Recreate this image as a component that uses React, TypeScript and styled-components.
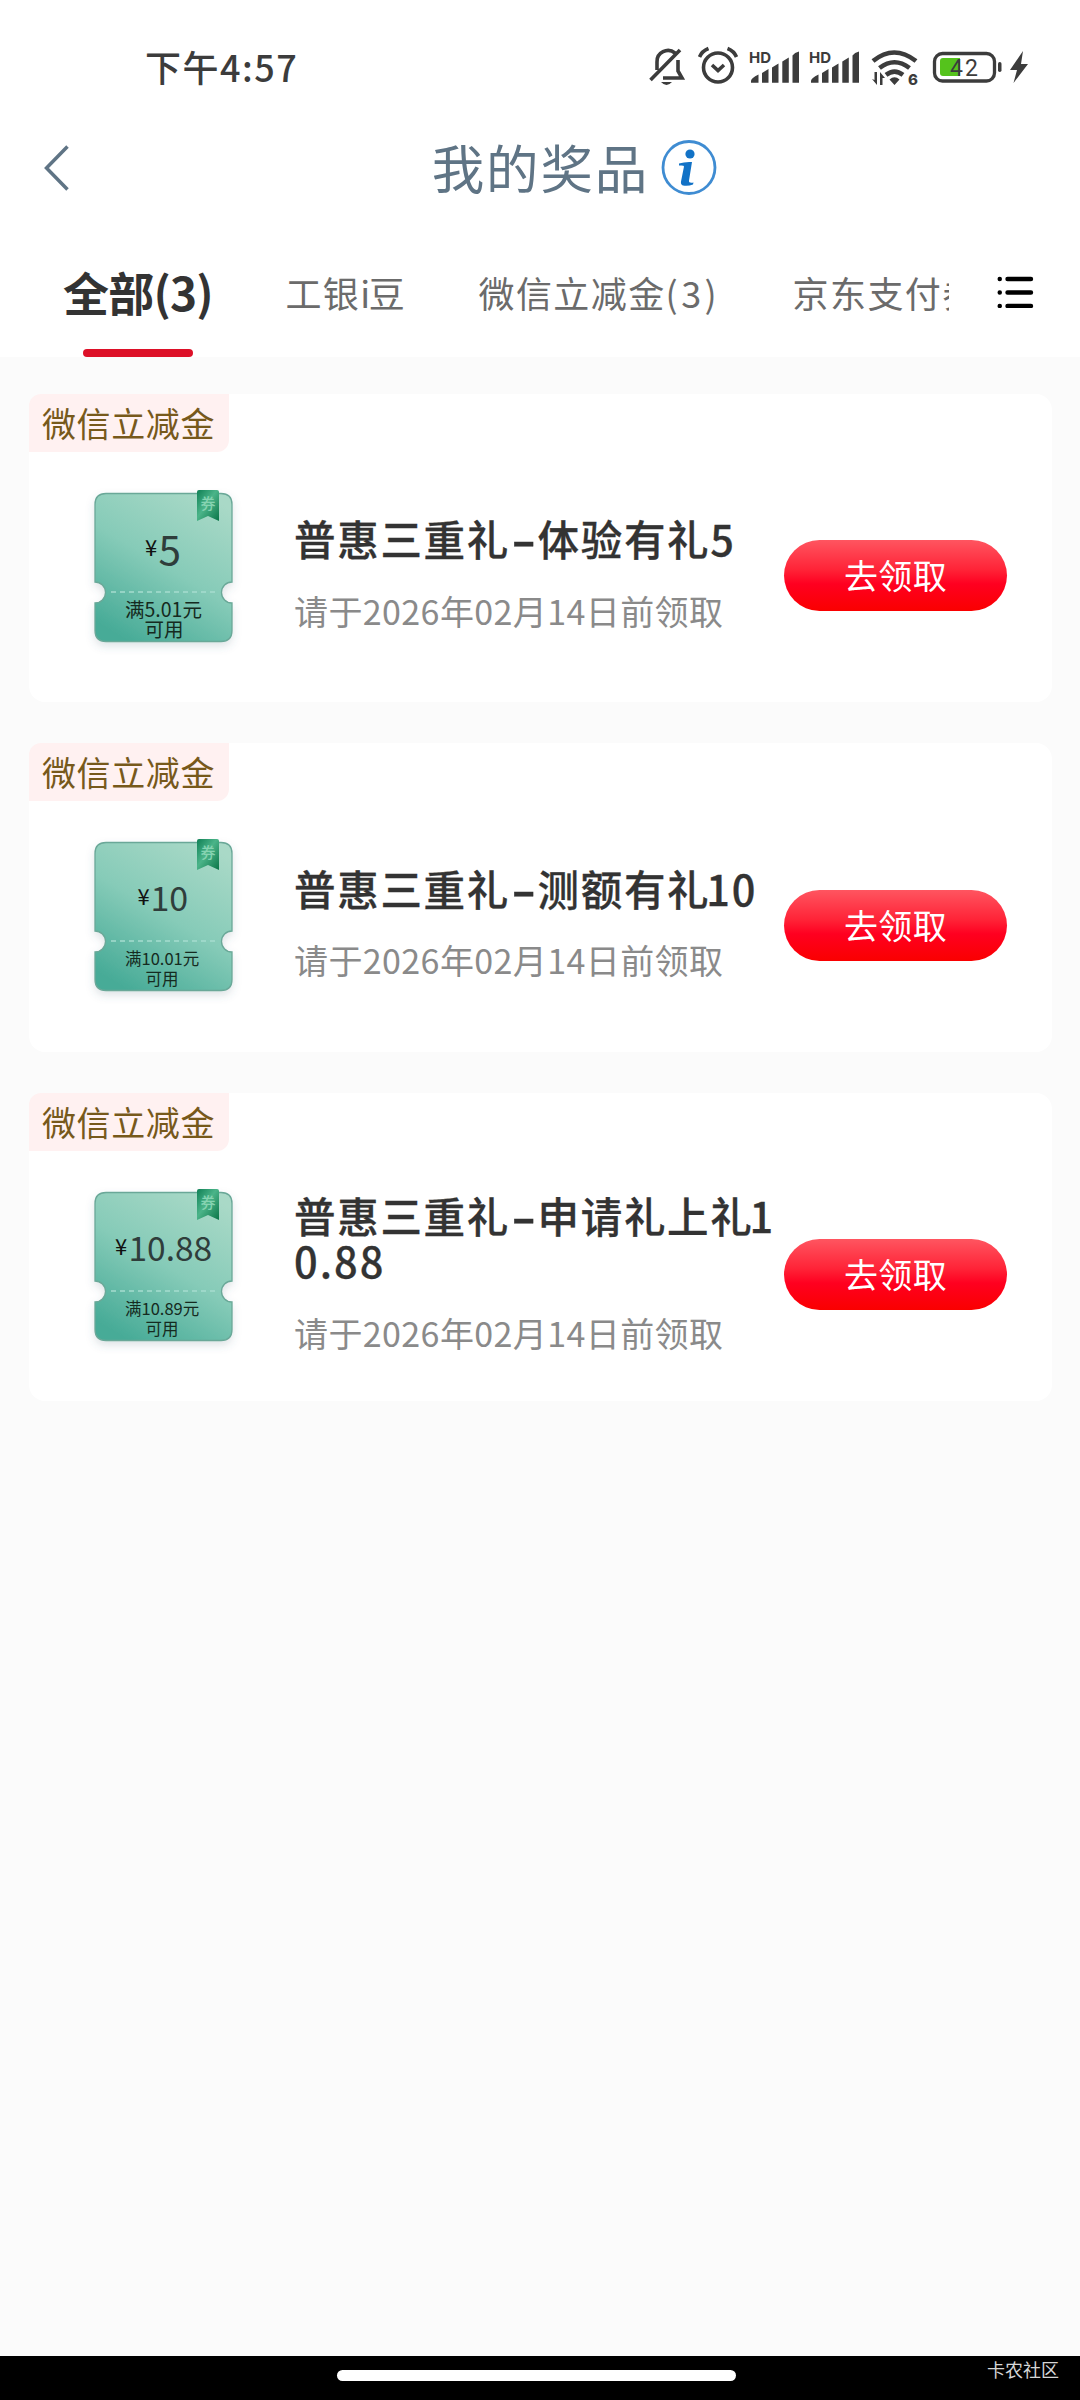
import React from 'react';
import styled, { createGlobalStyle } from 'styled-components';

const Global = createGlobalStyle`
  * { box-sizing: border-box; }
  body { margin: 0; background: #fbfbfb; font-family: "Noto Sans CJK SC", "Noto Sans", sans-serif; }
`;

const Screen = styled.div`
  width: 1080px;
  height: 2400px;
  display: flex;
  flex-direction: column;
  background: #fbfbfb;
  overflow: hidden;
`;

const StatusBar = styled.div`
  height: 112px;
  padding: 24px 48px 0 145px;
  display: flex;
  justify-content: space-between;
  align-items: center;
  background: #fff;
`;

const Clock = styled.span`
  margin-bottom: 4px;
  font-size: 36px;
  line-height: 40px;
  font-weight: 500;
  letter-spacing: 1.5px;
  color: #3c3c3c;
`;

const StatusIcons = styled.svg`
  width: 383px;
  height: 46px;
  display: block;
`;

const Header = styled.header`
  height: 112px;
  padding: 0 363px 0 44px;
  display: flex;
  align-items: center;
  justify-content: space-between;
  background: #fff;
`;

const TitleGroup = styled.div`
  display: flex;
  align-items: center;
  gap: 12px;
`;

const PageTitle = styled.h1`
  margin: 0 0 5px;
  font-size: 52.5px;
  line-height: 70px;
  font-weight: 400;
  letter-spacing: 1.8px;
  color: #5f7485;
`;

const TabBar = styled.nav`
  height: 133px;
  padding-left: 63px;
  display: flex;
  background: #fff;
`;

const TabScroller = styled.div`
  width: 886px;
  display: flex;
  gap: 72.5px;
  overflow: hidden;
  white-space: nowrap;
`;

const Tab = styled.div<{ $active?: boolean }>`
  flex: none;
  display: flex;
  flex-direction: column;
  align-items: center;
  justify-content: space-between;
  font-size: ${p => (p.$active ? 46 : 36)}px;
  font-weight: ${p => (p.$active ? 700 : 400)};
  letter-spacing: ${p => (p.$active ? -0.8 : 1.4)}px;
  line-height: ${p => (p.$active ? 135 : 137)}px;
  color: ${p => (p.$active ? '#333' : '#6b6b6b')};
`;

const TabLabel = styled.span`
  height: 125px;
`;

const TabLine = styled.i`
  width: 110px;
  height: 8px;
  border-radius: 4px;
  background: #dd1028;
`;

const Spaced = styled.span<{ $by: number }>`
  letter-spacing: ${p => p.$by}px;
`;

const ListIcon = styled.svg`
  width: 40px;
  height: 32px;
  margin: 52px 0 0 48px;
`;

const List = styled.main`
  flex: 1;
  padding: 36.5px 28px 0 29px;
  display: flex;
  flex-direction: column;
  gap: 41.2px;
`;

const Card = styled.section`
  height: 308.5px;
  border-radius: 16px;
  background: #fff;
`;

const Tag = styled.div`
  width: 200px;
  height: 58px;
  padding-left: 13px;
  border-radius: 12px 0 12px 0;
  background: #fff1f1;
  font-size: 34px;
  line-height: 58px;
  letter-spacing: 0.6px;
  color: #77591b;
  white-space: nowrap;
`;

const CardBody = styled.div`
  height: 248px;
  padding: 0 45px 0 52px;
  display: flex;
  align-items: center;
`;

const Coupon = styled.svg`
  flex: none;
  width: 170px;
  height: 180px;
  margin-bottom: 16px;
`;

const Info = styled.div`
  width: 490px;
  margin: 0 0 1px 43px;
`;

const PrizeName = styled.div`
  font-size: 41.5px;
  line-height: 45.5px;
  font-weight: 500;
  letter-spacing: 1.7px;
  color: #333;
  -webkit-text-stroke: 0.3px #333;
  white-space: nowrap;
`;

const Dash = styled.span`
  display: inline-block;
  width: 27.5px;
  text-align: center;
  letter-spacing: 0;
  font-weight: 700;
  transform: scaleX(1.65);
`;

const Digits = styled.span<{ $pull?: boolean }>`
  margin-left: ${p => (p.$pull ? -4 : 0)}px;
  letter-spacing: ${p => (p.$pull ? 1.7 : 2)}px;
`;

const Deadline = styled.div`
  margin-top: 26px;
  font-size: 34px;
  line-height: 46px;
  letter-spacing: 0.4px;
  color: #8a8a8a;
  white-space: nowrap;
`;

const ClaimButton = styled.button`
  flex: none;
  width: 223px;
  height: 71px;
  margin-left: auto;
  padding: 0 0 2px;
  border: 0;
  border-radius: 36px;
  background: linear-gradient(#ff5560, #ff2337 42%, #ff0020 62%, #fa0000);
  font-family: inherit;
  font-size: 34px;
  line-height: 69px;
  letter-spacing: 0.4px;
  color: #fff;
`;

const NavBar = styled.footer`
  height: 44px;
  padding: 0 21px 0 337px;
  display: flex;
  justify-content: space-between;
  background: #000;
`;

const HomeHandle = styled.div`
  width: 399px;
  height: 11px;
  margin-top: 14px;
  border-radius: 6px;
  background: #fff;
`;

const Watermark = styled.span`
  font-size: 18px;
  line-height: 26px;
  color: #d6d6d6;
`;

const Signal = ({ x }: { x: number }) => (
  <g transform={`translate(${x} 0)`}>
    <text x="-2" y="17.5" fontSize="15" fontWeight="700" fontFamily="Inter, sans-serif">HD</text>
    <path d="M0 37.700V36q0-3 7.500-6.500v8.200zM11 37.700V28l6.500-4v13.700zM21 37.700V22.500l6.500-4v19.200zM31.300 37.700V16.500l6.500-4v25.200zM41.500 37.700V10.500q2-3 6.500-4v31.200z" />
  </g>
);

const StatusGlyphs = () => (
  <StatusIcons viewBox="0 0 383 46" fill="#3c3c3c">
    <g fill="none" stroke="#3c3c3c" strokeWidth="3.600">
      <path d="M8 25V17a11 11 0 0 1 18-9M29 15v11l4 7H14M1.500 35 31 5" />
      <circle cx="69" cy="22.500" r="14.500" />
      <path d="m63 20 6 5.500 6-5.500M50.500 12q2.500-6 9-8.500M87.500 12q-2.500-6-9-8.500" />
    </g>
    <path d="M12 37h11q-5.500 6-11 0z" />
    <Signal x={102} />
    <Signal x={162} />
    <g fill="none" stroke="#3c3c3c" strokeWidth="4.600">
      <path d="M224 16q21-17 43 0M230.500 23q15-11.500 30 0M237 29.800q8.500-6.500 17 0" />
    </g>
    <path d="m240.500 34.500q5-4.500 10 0l-5 5.500zM223 34l5 6v-13h-2.500v8zM231 40V27l5 6h-2.500v7z" />
    <text x="259" y="39.500" fontSize="15" fontWeight="800" fontFamily="Inter, sans-serif">6</text>
    <rect x="285.500" y="8.500" width="60" height="27.500" rx="8" fill="#fff" stroke="#3c3c3c" strokeWidth="3.300" />
    <path d="M294 13h17v18h-17q-3 0-3-3V16q0-3 3-3z" fill="#55c31c" />
    <text x="301" y="31" fontSize="23" fontFamily="Roboto, sans-serif" letterSpacing="2">42</text>
    <rect x="349" y="17" width="3.500" height="10" rx="1.700" />
    <path d="M374 6 361 25h7l-3.500 13L379 19h-7z" />
  </StatusIcons>
);

interface Prize {
  id: number;
  amount: string;
  amountSize: number;
  amountY: number;
  yenX: number;
  amountX: number;
  condition: string;
  conditionSize: number;
  useX: number;
  name: React.ReactNode;
}

const prizes: Prize[] = [
  {
    id: 1, amount: '5', amountSize: 40.5, amountY: 87, yenX: 64, amountX: 77.5,
    condition: '满5.01元', conditionSize: 19.5, useX: 63.5,
    name: <>体验有礼<Digits>5</Digits></>,
  },
  {
    id: 2, amount: '10', amountSize: 34, amountY: 84, yenX: 56.5, amountX: 69.5,
    condition: '满10.01元', conditionSize: 16.5, useX: 64.5,
    name: <>测额有礼<Digits $pull>10</Digits></>,
  },
  {
    id: 3, amount: '10.88', amountSize: 33.5, amountY: 84, yenX: 34, amountX: 47.5,
    condition: '满10.89元', conditionSize: 16.5, useX: 64.5,
    name: <>申请礼上礼<Digits $pull>1</Digits><br /><Digits>0.88</Digits></>,
  },
];

const CouponArt = ({ p }: { p: Prize }) => (
  <Coupon viewBox="0 0 170 180">
    <defs>
      <linearGradient id={`body${p.id}`} x1="0.800" y1="0" x2="0.250" y2="1">
        <stop offset="0" stopColor="#a9d9c7" />
        <stop offset="0.500" stopColor="#86cbb8" />
        <stop offset="1" stopColor="#47ab97" />
      </linearGradient>
      <linearGradient id={`ribbon${p.id}`} x1="0" y1="0" x2="1" y2="1">
        <stop offset="0" stopColor="#0f8055" />
        <stop offset="0.450" stopColor="#4bb489" />
        <stop offset="1" stopColor="#0b7548" />
      </linearGradient>
      <filter id={`shadow${p.id}`} x="-20%" y="-20%" width="140%" height="140%">
        <feDropShadow dx="0" dy="4" stdDeviation="4" floodColor="#4d6373" floodOpacity="0.180" />
      </filter>
    </defs>
    <path
      filter={`url(#shadow${p.id})`}
      d="M25 15.500H140q11 0 11 11V104a10.500 10.500 0 0 0 0 21V152.500q0 11-11 11H25q-11 0-11-11V125a10.500 10.500 0 0 0 0-21V26.500q0-11 11-11z"
      fill={`url(#body${p.id})`}
      stroke="#6aa898"
      strokeWidth="1.300"
    />
    <path d="M30 114H138" stroke="#a6dccf" strokeOpacity="0.750" strokeWidth="2" strokeDasharray="5 4" />
    <path d="M118 12h18q2 0 2 2v29l-11-5-11 5V14q0-2 2-2z" fill={`url(#ribbon${p.id})`} />
    <text x="127" y="31" fontSize="15" fontWeight="500" textAnchor="middle" fill="#86d3b1">券</text>
    <text x={p.yenX} y="77.500" fontSize="22" fill="#111">¥</text>
    <text x={p.amountX} y={p.amountY} fontSize={p.amountSize} fill="#2f3d3b">{p.amount}</text>
    <text fontSize={p.conditionSize} fill="#152a20">
      <tspan x="44" y={p.id === 1 ? 138.5 : 138}>{p.condition}</tspan>
      <tspan x={p.useX} y={p.id === 1 ? 158.5 : 158}>可用</tspan>
    </text>
  </Coupon>
);

const PrizeCard = ({ p }: { p: Prize }) => (
  <Card>
    <Tag>微信立减金</Tag>
    <CardBody>
      <CouponArt p={p} />
      <Info>
        <PrizeName>普惠三重礼<Dash>-</Dash>{p.name}</PrizeName>
        <Deadline>请于2026年02月14日前领取</Deadline>
      </Info>
      <ClaimButton>去领取</ClaimButton>
    </CardBody>
  </Card>
);

export default function App() {
  return (
    <Screen>
      <Global />
      <StatusBar>
        <Clock>下午4:57</Clock>
        <StatusGlyphs />
      </StatusBar>
      <Header>
        <svg width="28" height="48" viewBox="0 0 28 48" fill="none" stroke="#5f7485" strokeWidth="3.500">
          <path d="M23.500 2.500 2.500 24l21 21.500" />
        </svg>
        <TitleGroup>
          <PageTitle>我的奖品</PageTitle>
          <svg width="56" height="56" viewBox="0 0 56 56">
            <circle cx="28" cy="27.500" r="26" fill="#fff" stroke="#3f8cd2" strokeWidth="2.800" />
            <circle cx="29" cy="14" r="4.600" fill="#1272c6" />
            <path d="M18 23.500q6-2 13-1.500L28 40.500q-.5 3 4.500 2l-.5 2q-5 2-10 1-2.500-1-2-4l3-15q.3-1.500-5-1z" fill="#1272c6" />
          </svg>
        </TitleGroup>
      </Header>
      <TabBar>
        <TabScroller>
          <Tab $active><TabLabel>全部(3)</TabLabel><TabLine /></Tab>
          <Tab><TabLabel>工银<Spaced $by={-1.5}>i</Spaced>豆</TabLabel></Tab>
          <Tab><TabLabel>微信立减金<Spaced $by={3.4}>(3)</Spaced></TabLabel></Tab>
          <Tab><TabLabel>京东支付券</TabLabel></Tab>
        </TabScroller>
        <ListIcon viewBox="0 0 40 32" stroke="#000" strokeWidth="4.400" strokeLinecap="round">
          <path d="M10.500 3H34M10.500 16.500H34M10.500 30H34M2.700 3h.1M2.700 16.500h.1M2.700 30h.1" />
        </ListIcon>
      </TabBar>
      <List>
        {prizes.map(p => <PrizeCard key={p.id} p={p} />)}
      </List>
      <NavBar>
        <HomeHandle />
        <Watermark>卡农社区</Watermark>
      </NavBar>
    </Screen>
  );
}
